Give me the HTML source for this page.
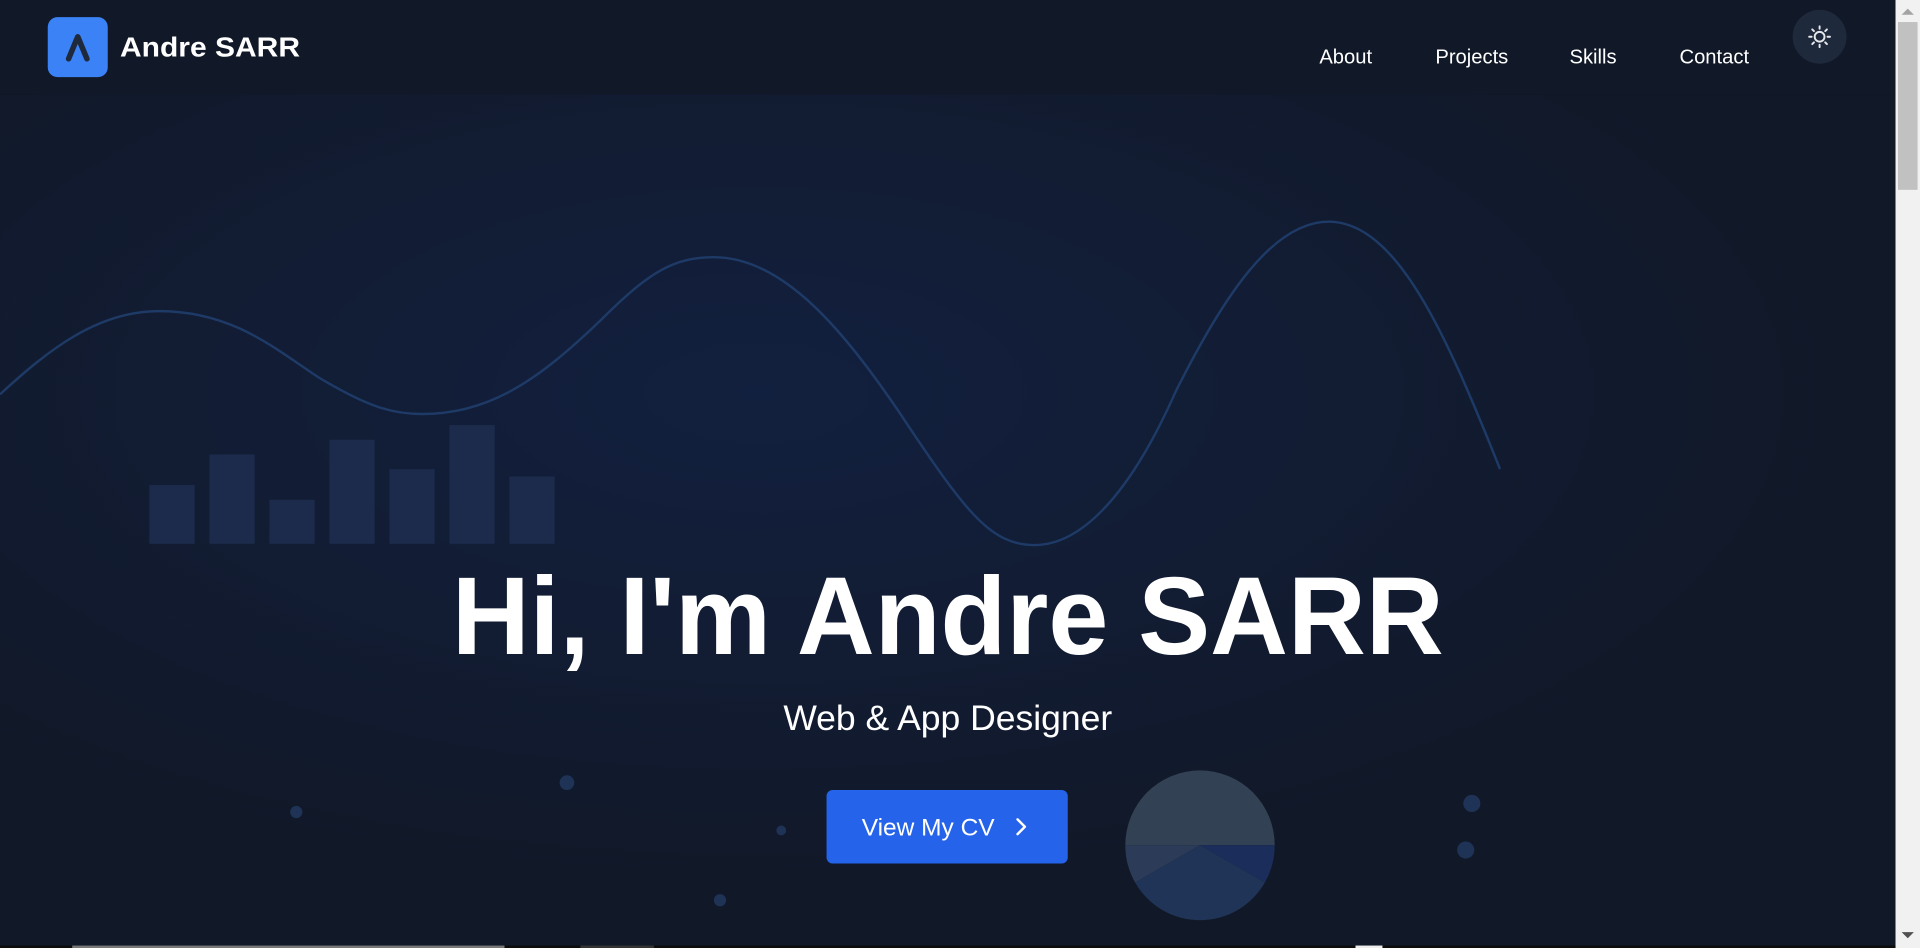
<!DOCTYPE html>
<html><head><meta charset="utf-8"><style>
html,body{margin:0;padding:0;width:1920px;height:948px;overflow:hidden;background:#111827}
svg{display:block}
text{font-family:"Liberation Sans",Arial,sans-serif}
</style></head><body>
<svg width="1920" height="948" viewBox="0 0 1568 774" preserveAspectRatio="none" xmlns="http://www.w3.org/2000/svg">
<defs>
<radialGradient id="bg" cx="0.4" cy="0.35" r="0.6">
<stop offset="0" stop-color="#12203f"/>
<stop offset="1" stop-color="#111827"/>
</radialGradient>
</defs>
<rect width="1568" height="774" fill="#111827"/>
<rect y="77" width="1548" height="697" fill="url(#bg)"/>
<rect width="1548" height="77" fill="#111827"/>
<path d="M0,322 C40,285 80,254 130,254 C190,254 225,285 260,308 C300,332 320,338 345,338 C400,338 440,310 490,262 C530,222 550,210 583,210 C640,210 690,270 740,345 C790,420 810,445 845,445 C880,445 920,410 960,320 C1000,240 1040,181 1085,181 C1140,181 1180,270 1225,383" fill="none" stroke="#1e3a66" stroke-width="2"/>
<g fill="#1c2b4b">
<rect x="122" y="396" width="37" height="48"/>
<rect x="171" y="371" width="37" height="73"/>
<rect x="220" y="408" width="37" height="36"/>
<rect x="269" y="359" width="37" height="85"/>
<rect x="318" y="383" width="37" height="61"/>
<rect x="367" y="347" width="37" height="97"/>
<rect x="416" y="389" width="37" height="55"/>
</g>
<g fill="#1e3356">
<circle cx="242" cy="663" r="5"/>
<circle cx="463" cy="639" r="6"/>
<circle cx="638" cy="678" r="4"/>
<circle cx="588" cy="735" r="5"/>
<circle cx="1202" cy="656" r="7"/>
<circle cx="1197" cy="694" r="7"/>
</g>
<path d="M919,690 A61,61 0 0 1 1041,690 Z" fill="#334155"/>
<path d="M980,690 L1041,690 A61,61 0 0 1 1033,720.5 Z" fill="#1b2d5a"/>
<path d="M980,690 L1033,720.5 A61,61 0 0 1 927,720.5 Z" fill="#1f3456"/>
<path d="M980,690 L927,720.5 A61,61 0 0 1 919,690 Z" fill="#2b3b58"/>
<rect x="39" y="14" width="49" height="49" rx="8" fill="#3b82f6"/>
<path d="M56,48 L63.5,30 L71,48" fill="none" stroke="#1e293b" stroke-width="4.5" stroke-linecap="round" stroke-linejoin="round"/>
<text x="98" y="46" font-size="22.5" font-weight="bold" fill="#fff" textLength="147" lengthAdjust="spacingAndGlyphs">Andre SARR</text>
<g font-size="16.5" fill="#fff" text-anchor="middle">
<text x="1099" y="52">About</text>
<text x="1202" y="52">Projects</text>
<text x="1301" y="52">Skills</text>
<text x="1400" y="52">Contact</text>
</g>
<circle cx="1486" cy="30" r="22" fill="#1e293b"/>
<g stroke="#e5e7eb" stroke-width="1.6" stroke-linecap="round" fill="none">
<circle cx="1486" cy="30" r="4"/>
<path d="M1486,21.5v2 M1486,36.5v2 M1477.5,30h2 M1492.5,30h2 M1480,24l1.4,1.4 M1490.6,34.6l1.4,1.4 M1480,36l1.4,-1.4 M1490.6,25.4l1.4,-1.4"/>
</g>
<text x="774" y="534" font-size="90" font-weight="bold" fill="#fff" text-anchor="middle" textLength="810" lengthAdjust="spacingAndGlyphs">Hi, I'm Andre SARR</text>
<text x="774" y="596" font-size="29" fill="#fff" text-anchor="middle">Web &amp; App Designer</text>
<rect x="675" y="645" width="197" height="60" rx="5" fill="#2563eb"/>
<text x="758" y="682" font-size="20" fill="#fff" text-anchor="middle">View My CV</text>
<path d="M831,669 L837,675 L831,681" fill="none" stroke="#fff" stroke-width="2" stroke-linecap="round" stroke-linejoin="round"/>
<rect x="1548" y="0" width="20" height="774" fill="#f1f1f1"/>
<rect x="1550" y="18" width="16" height="137" fill="#c1c1c1"/>
<path d="M1553,12 L1558,7 L1563,12 Z" fill="#a3a3a3"/>
<path d="M1553,761 L1558,766 L1563,761 Z" fill="#505050"/>
<rect x="0" y="772" width="1548" height="2" fill="#0d0d0d"/>
<rect x="59" y="772" width="353" height="2" fill="#777"/>
<rect x="474" y="772" width="60" height="2" fill="#333"/>
<rect x="1107" y="772" width="22" height="2" fill="#eee"/>
</svg>
</body></html>
